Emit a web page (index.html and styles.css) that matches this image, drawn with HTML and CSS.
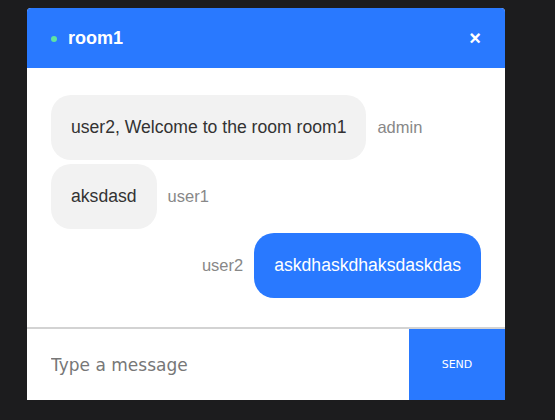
FILE: index.html
```html
<!DOCTYPE html>
<html>
<head>
<meta charset="utf-8">
<link rel="stylesheet" href="styles.css">
</head>
<body>
<div class="chat">
  <div class="header">
    <span class="dot"></span>
    <span class="title">room1</span>
    <span class="close">×</span>
  </div>
  <div class="messages">
    <div class="row">
      <div class="bubble">user2, Welcome to the room room1</div>
      <span class="name">admin</span>
    </div>
    <div class="row">
      <div class="bubble">aksdasd</div>
      <span class="name">user1</span>
    </div>
    <div class="row mine">
      <span class="name">user2</span>
      <div class="bubble">askdhaskdhaksdaskdas</div>
    </div>
  </div>
  <div class="composer">
    <input class="input" type="text" placeholder="Type a message">
    <button class="send">SEND</button>
  </div>
</div>
</body>
</html>
```
FILE: styles.css
```css
html, body {
  margin: 0;
  padding: 0;
  background: #1c1c1e;
  height: 100%;
}
body {
  padding: 8px 0 0 27px;
  box-sizing: border-box;
  font-family: "Liberation Sans", Arial, sans-serif;
}
.chat {
  width: 478px;
  height: 392px;
  background: #fff;
  border-radius: 4px 4px 0 0;
  overflow: hidden;
  display: flex;
  flex-direction: column;
}
.header {
  height: 60px;
  background: #2979ff;
  display: flex;
  align-items: center;
  padding: 0 24px 0 24px;
  color: #fff;
}
.dot {
  width: 6px;
  height: 6px;
  border-radius: 50%;
  background: #5fe3a1;
  margin-right: 11px;
  margin-top: 1px;
}
.title {
  font-size: 18px;
  font-weight: bold;
  flex: 1;
}
.close {
  font-size: 20px;
  font-weight: bold;
  line-height: 1;
}
.messages {
  flex: 1;
  padding: 27px 24px 0 24px;
  display: flex;
  flex-direction: column;
  gap: 4px;
}
.row {
  display: flex;
  align-items: center;
}
.row.mine {
  justify-content: flex-end;
}
.bubble {
  background: #f2f2f2;
  color: #333;
  font-size: 17.6px;
  line-height: 25px;
  padding: 20px;
  border-radius: 20px;
}
.mine .bubble {
  background: #2979ff;
  color: #fff;
}
.name {
  color: #888;
  font-size: 16.5px;
  margin-left: 11px;
}
.mine .name {
  margin-left: 0;
  margin-right: 11px;
}
.composer {
  height: 71px;
  border-top: 2px solid #d3d3d3;
  display: flex;
}
.input {
  flex: 1;
  border: none;
  outline: none;
  padding: 0 24px;
  font-family: "DejaVu Sans", sans-serif;
  font-size: 17px;
  color: #333;
  background: #fff;
}
.input::placeholder {
  color: #777;
}
.send {
  width: 96px;
  border: none;
  background: #2979ff;
  color: #fff;
  font-family: "DejaVu Sans", sans-serif;
  font-size: 11px;
  padding: 0;
}
```
